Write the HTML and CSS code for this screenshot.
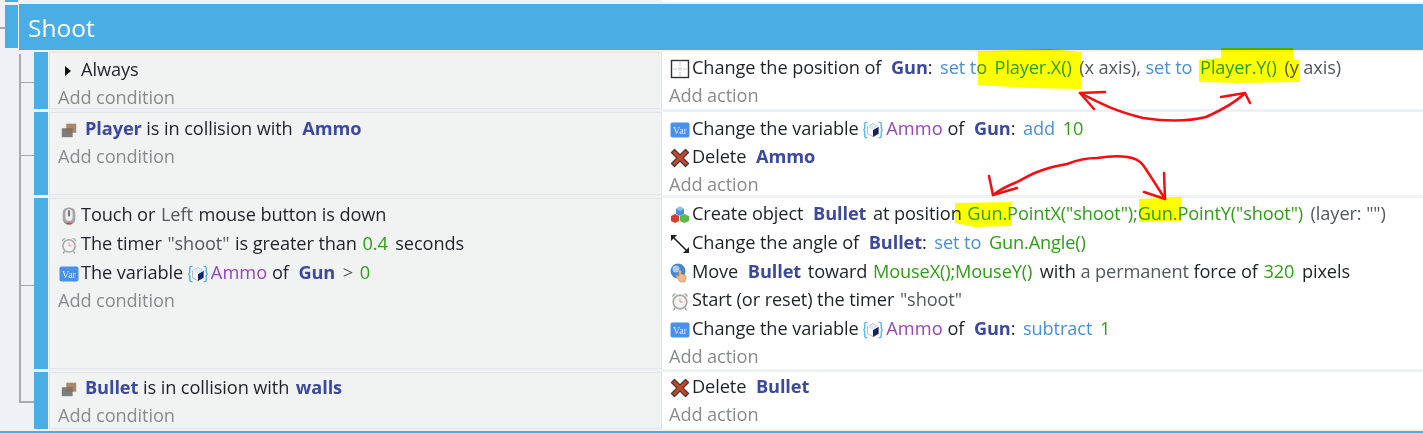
FILE: index.html
```html
<!DOCTYPE html>
<html lang="en">
<head>
<meta charset="utf-8">
<title>Events</title>
<link rel="stylesheet" href="styles.css">
</head>
<body>
<svg class="defs" width="0" height="0" aria-hidden="true">
  <defs>
    <symbol id="i-pos" viewBox="0 0 20 20"><rect x="1.500" y="1.500" width="17" height="17" fill="#fff" stroke="#333" stroke-width="1.400"/><path d="M10 3v14M3 10h14" stroke="#bbb" stroke-dasharray="1.500 1" fill="none"/></symbol>
    <symbol id="i-var" viewBox="0 0 20 16"><rect x="0.500" y="0.500" width="19" height="15" rx="2" fill="#4a90e8"/><text x="10" y="11.500" text-anchor="middle" class="var-t">Var</text></symbol>
    <symbol id="i-del" viewBox="0 0 20 20"><path d="M1.500 4.500 4.500 1.500 10 7l5.500-5.500 3 3L13 10l5.500 5.500-3 3L10 13l-5.500 5.500-3-3L7 10z" fill="#c9452b" stroke="#4a3a34" stroke-width="1.400" stroke-linejoin="round"/></symbol>
    <symbol id="i-create" viewBox="0 0 20 20"><path d="M6 4l4-2.500L14 4v5l-4 2-4-2z" fill="#4a90d9"/><path d="M10 1.500 14 4l-4 2-4-2z" fill="#8fc0ee"/><path d="M1 11l4-2 4 2v5l-4 2-4-2z" fill="#d93a30"/><path d="M10 11l4.500-2 4.500 2v5l-4.500 2-4.500-2z" fill="#5cb84a"/></symbol>
    <symbol id="i-angle" viewBox="0 0 20 20"><path d="M3 3 17 17" stroke="#222" stroke-width="1.600"/><path d="M1 1h6L1 7zM19 19h-6l6-6z" fill="#222"/></symbol>
    <symbol id="i-move" viewBox="0 0 20 20"><circle cx="8" cy="8" r="7.500" fill="#4a86cf"/><circle cx="6" cy="6" r="3.500" fill="#a8cdf0"/><path d="M9 8c1-1.500 2-1 2 0v3l4 1c1 .5 1.500 1.500 1 3l-1 4H10L6 13c0-1 1-1.500 2-.5l1 1z" fill="#f3b98a" stroke="#d08b5c" stroke-width=".6"/></symbol>
    <symbol id="i-timer" viewBox="0 0 20 20"><circle cx="10" cy="11" r="6.800" fill="#f4f4f4" stroke="#aaa" stroke-width="1.800"/><path d="M2.500 6.500a3 3 0 0 1 4-4zM17.500 6.500a3 3 0 0 0-4-4z" fill="#b5b5b5"/><path d="M10 7v4h3" stroke="#c99" fill="none"/><path d="M5 17 3.500 19.500M15 17l1.500 2.500" stroke="#999" stroke-width="1.400"/></symbol>
    <symbol id="i-mouse" viewBox="0 0 20 20"><rect x="3" y="0.500" width="14" height="19" rx="6" fill="#a3a5a9"/><rect x="6" y="2.500" width="8" height="13" rx="4" fill="#eeeef0"/><rect x="8.800" y="3.500" width="2.400" height="7" rx="1" fill="#777"/><path d="M6 17.500h8l-2 2H8z" fill="#e04040"/></symbol>
    <symbol id="i-coll" viewBox="0 0 20 20"><rect x="7" y="3" width="11" height="10" fill="#ab8769"/><rect x="2" y="8" width="12" height="10" fill="#7d7d7d"/><rect x="7" y="8" width="7" height="5" fill="#8a6f5c"/></symbol>
    <symbol id="i-obj" viewBox="0 0 22 20"><path d="M5 1.500H3.500C2.500 1.500 2 2 2 3V8L.8 10 2 12v5c0 1 .5 1.500 1.500 1.500H5M17 1.500h1.500c1 0 1.500.5 1.500 1.500v5l1.200 2-1.200 2v5c0 1-.5 1.500-1.500 1.500H17" fill="none" stroke="#35a9e6" stroke-width="1.300"/><path d="M5 6.500 11 3l6 3.500v7.500l-6 3.500L5 14z" fill="#f7fafd" stroke="#5a6d9c" stroke-width=".5"/><path d="M11 10l6-3.500v7.500l-6 3.500z" fill="#14235e"/><path d="M11 3l6 3.500L11 10 5 6.500z" fill="#dcebf7"/></symbol>
  </defs>
</svg>

<main class="sheet">
  <div class="stub"><span class="stub-bar"></span><span class="stub-cond"></span><span class="stub-act"></span></div>

  <header class="group">
    <span class="group-tab"></span>
    <h1 class="group-title">Shoot</h1>
    <span class="group-tick"></span>
  </header>

  <section class="tree">
    <article class="event h-a">
      <span class="bar"></span>
      <div class="conds first-a compact">
        <p class="line"><span class="tri"></span>Always</p>
        <p class="line add">Add condition</p>
      </div>
      <div class="acts first-b compact">
        <p class="line"><svg class="ic"><use href="#i-pos"/></svg>Change the position of <b class="col">Gun</b><span class="colon">:</span> <span class="op">set to</span> <span class="ex">Player.X()</span> <span class="par">(x axis),</span> <span class="op">set to</span> <span class="ex">Player.Y()</span> <span class="par">(y axis)</span></p>
        <p class="line add">Add action</p>
      </div>
    </article>

    <article class="event h-b tick-b">
      <span class="bar"></span>
      <div class="conds first-c compact">
        <p class="line"><svg class="ic coll"><use href="#i-coll"/></svg><b class="nm">Player</b> is in collision with <b>Ammo</b></p>
        <p class="line add">Add condition</p>
      </div>
      <div class="acts first-c compact">
        <p class="line"><svg class="ic"><use href="#i-var"/></svg>Change the variable <svg class="ob"><use href="#i-obj"/></svg><span class="vr">Ammo</span> of <b class="col">Gun</b><span class="colon">:</span> <span class="op">add</span> <span class="ex">10</span></p>
        <p class="line"><svg class="ic"><use href="#i-del"/></svg>Delete <b>Ammo</b></p>
        <p class="line add">Add action</p>
      </div>
    </article>

    <article class="event h-c">
      <span class="bar"></span>
      <div class="conds first-d">
        <p class="line"><svg class="ic small"><use href="#i-mouse"/></svg>Touch or <span class="par">Left</span> mouse button is down</p>
        <p class="line"><svg class="ic small"><use href="#i-timer"/></svg>The timer <span class="par">"shoot"</span> is greater than <span class="ex">0.4</span> seconds</p>
        <p class="line"><svg class="ic wide"><use href="#i-var"/></svg>The variable <svg class="ob"><use href="#i-obj"/></svg><span class="vr">Ammo</span> of <b>Gun</b> <span class="par">&gt;</span> <span class="ex">0</span></p>
        <p class="line add">Add condition</p>
      </div>
      <div class="acts first-d">
        <p class="line"><svg class="ic"><use href="#i-create"/></svg>Create object <b>Bullet</b> at position <span class="ex">Gun.PointX("shoot");Gun.PointY("shoot")</span> <span class="par">(layer: "")</span></p>
        <p class="line"><svg class="ic"><use href="#i-angle"/></svg>Change the angle of <b class="col">Bullet</b><span class="colon">:</span> <span class="op">set to</span> <span class="ex">Gun.Angle()</span></p>
        <p class="line"><svg class="ic"><use href="#i-move"/></svg>Move <b>Bullet</b> toward <span class="ex">MouseX();MouseY()</span> with <span class="par">a permanent</span> force of <span class="ex">320</span> pixels</p>
        <p class="line"><svg class="ic"><use href="#i-timer"/></svg>Start (or reset) the timer <span class="par">"shoot"</span></p>
        <p class="line"><svg class="ic"><use href="#i-var"/></svg>Change the variable <svg class="ob"><use href="#i-obj"/></svg><span class="vr">Ammo</span> of <b class="col">Gun</b><span class="colon">:</span> <span class="op">subtract</span> <span class="ex">1</span></p>
        <p class="line add">Add action</p>
      </div>
    </article>

    <article class="event h-a last">
      <span class="bar"></span>
      <div class="conds first-e compact">
        <p class="line"><svg class="ic coll"><use href="#i-coll"/></svg><b class="nm">Bullet</b> is in collision with <b class="tight">walls</b></p>
        <p class="line add">Add condition</p>
      </div>
      <div class="acts first-e compact">
        <p class="line"><svg class="ic"><use href="#i-del"/></svg>Delete <b>Bullet</b></p>
        <p class="line add">Add action</p>
      </div>
    </article>
  </section>
  <div class="foot"></div>

  <svg class="marks highlight" viewBox="0 0 1423 433" aria-hidden="true">
    <path d="M978 51 1050 49 1081 52V89L1030 88 978 85z"/>
    <path d="M1199 60 1221 58V48H1293V60L1300 60V82L1240 83 1199 82z"/>
    <path d="M955 203 1012 202V226L975 227 955 223z"/>
    <path d="M1139 199 1181 197 1182 221 1139 222z"/>
  </svg>
  <svg class="marks ink" viewBox="0 0 1423 433" aria-hidden="true">
    <path d="M1080 93C1100 103 1112 110 1143 118C1170 122 1190 121 1206 117C1226 108 1236 102 1245 93"/>
    <path d="M1105 92 1080 93 1094 109M1221 97 1245 93 1250 103"/>
    <path d="M993 195C1002 188 1012 184 1017 182C1025 178 1033 173 1040 171C1050 167 1058 166 1067 164C1077 160 1087 158 1097 158C1110 156 1120 156 1127 157C1135 158 1140 161 1143 165C1150 175 1158 188 1165 199"/>
    <path d="M989 176 993 195 1017 188M1164 173 1165 199 1144 192"/>
  </svg>
</main>
</body>
</html>
```
FILE: styles.css
```css
* { box-sizing: border-box; }
html, body { margin: 0; height: 100%; }
body {
  background: #f0f1f4;
  font-family: "Open Sans", "Noto Sans", sans-serif;
  font-size: 18.2px;
  letter-spacing: -0.1px;
  color: #1f2226;
  overflow: hidden;
}
.defs { position: absolute; }
.sheet { position: relative; width: 1423px; height: 433px; overflow: hidden; }

.stub { display: flex; height: 2px; margin-left: 5px; }
.stub-bar { width: 13px; background: #4aaee4; margin-right: 1px; }
.stub-cond { width: 643px; background: #f1f2f2; }
.stub-act { flex: 1; background: #fff; }

.group { position: relative; display: flex; height: 46px; margin: 2px 0 2px 5px; }
.group-tab { width: 13px; margin: 1px 1px 2px 0; background: #4aaee4; }
.group-tick { position: absolute; left: -5px; top: 23px; width: 5px; height: 2px; background: #a9a9ab; }
.group-title {
  flex: 1; margin: 0; padding-left: 9px;
  background: #4aaee4; color: #fff;
  font-size: 24.5px; font-weight: 400; line-height: 48px; letter-spacing: 0;
}

.tree { position: relative; margin-left: 19px; padding-left: 15px; display: flex; flex-direction: column; gap: 3px; }
.tree::before { content: ""; position: absolute; left: 0; top: 2px; bottom: 27px; width: 2px; background: #a9a9ab; }

.event { position: relative; display: flex; }
.event::before { content: ""; position: absolute; left: -15px; top: 30px; width: 15px; height: 1px; background: #a9a9ab; }
.tick-b::before { top: 43px; }
.h-c::before { top: 87px; }
.last::before { top: 29px; height: 2px; }
.h-a { height: 57px; }
.h-b { height: 83px; }
.h-c { height: 171px; }

.bar { width: 14px; background: #4aaee4; margin-right: 1px; flex: none; }
.conds { width: 613px; flex: none; padding-left: 8px; background: #f1f2f2; border: 1px solid #e4e5e6; }
.acts { flex: 1; padding-left: 7px; background: #fff; }

.first-a { padding-top: 1.500px; }
.first-b { padding-top: 0.500px; }
.first-c { padding-top: 1px; }
.conds.first-d { padding-top: 1.400px; }
.acts.first-d { padding-top: 1.400px; }
.first-e { padding-top: 0; }
.acts.first-c { padding-top: 2px; }

.line { margin: 0; line-height: 28.6px; height: 28.6px; white-space: pre-wrap; }
.compact .line { line-height: 28px; height: 28px; }
.add { color: #8a8b8d; }

b { font-weight: 700; color: #3d4a9c; margin: 0 2px 0 5px; }
b.nm { margin-left: 0; margin-right: 0; }
b.tight { margin-left: 2px; }
b.col { margin-right: 0; }
.colon { margin-right: 3px; }
.op { color: #4a90d9; }
.ex { color: #2f9e16; margin: 0 3px 0 1px; letter-spacing: -0.14px; }
.op + .ex { margin-left: 3px; }
.par { color: #55585c; margin: 0 1px; }
.ex + .par { margin: 0; }
.vr { color: #9347b8; letter-spacing: 0.1px; }

.ic { width: 20px; height: 20px; margin-right: 2px; margin-left: 1px; vertical-align: -5px; }
.ic.small { width: 18px; margin: 0 3px 0 2px; }
.ic.coll { width: 18px; margin: 0 7px 0 2px; }
.ic.wide { margin: 0 2px 0 1px; }
.ob { width: 20px; height: 20px; margin-right: 3px; vertical-align: -5px; }
.var-t { font-family: "Liberation Serif", serif; font-size: 10px; fill: #d8e8fb; letter-spacing: 0; }

.tri {
  display: inline-block; width: 0; height: 0; margin: 0 10px 0 7px;
  border-left: 6px solid #111; border-top: 5px solid transparent; border-bottom: 5px solid transparent;
}

.foot { position: absolute; left: 0; right: 0; top: 431px; height: 2px; background: #4aaee4; }

.marks { position: absolute; inset: 0; width: 1423px; height: 433px; pointer-events: none; }
.highlight { mix-blend-mode: multiply; fill: #ffff00; }
.ink { fill: none; stroke: #f50d14; stroke-width: 2.500; stroke-linecap: round; stroke-linejoin: round; }
```
